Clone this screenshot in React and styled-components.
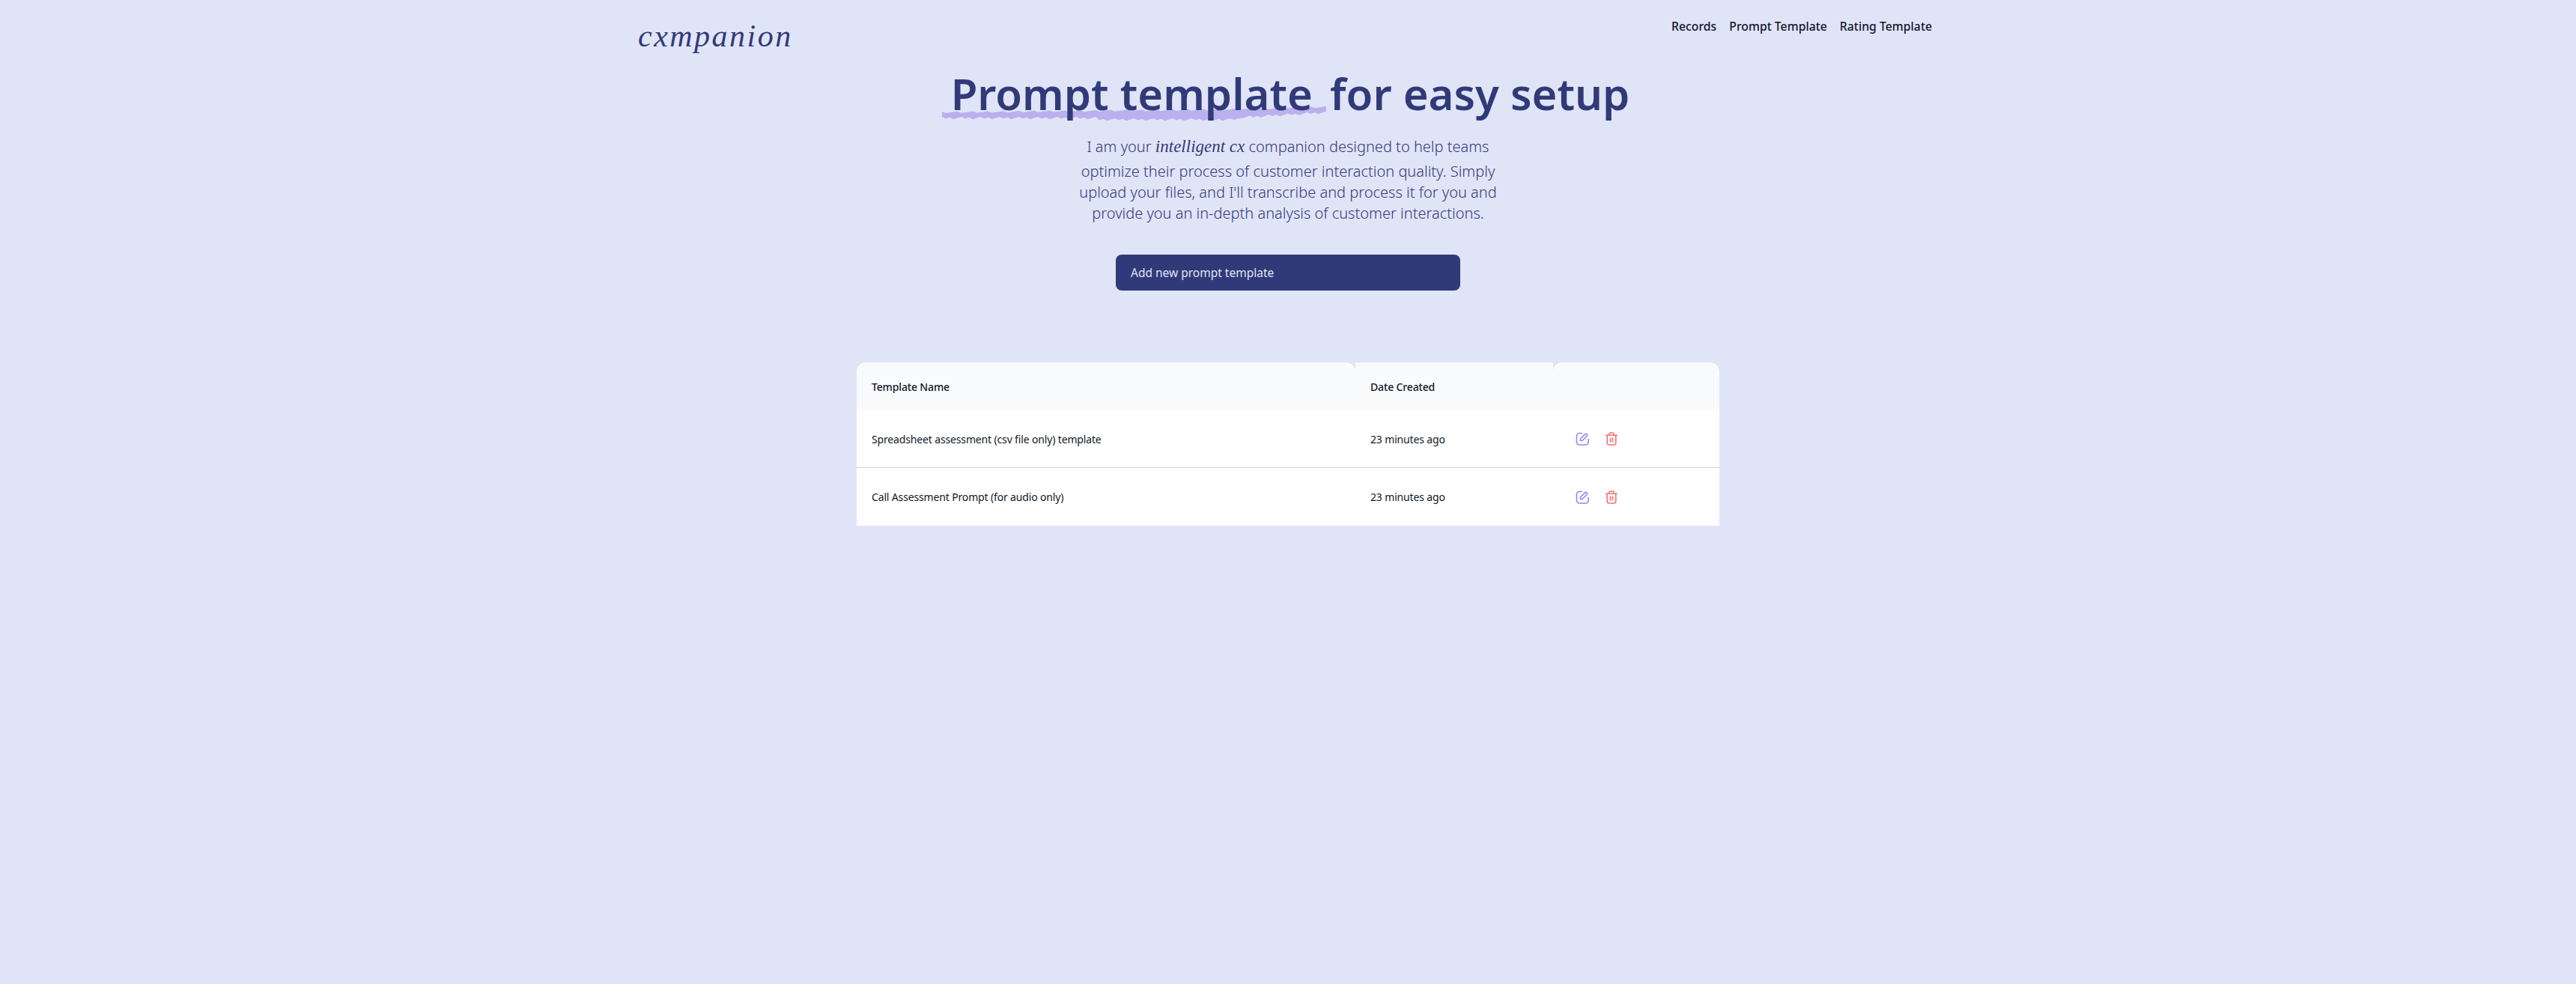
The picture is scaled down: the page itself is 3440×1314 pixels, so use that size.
import styled, { createGlobalStyle } from "styled-components";

const templates = [
  { name: "Spreadsheet assessment (csv file only) template", date: "23 minutes ago" },
  { name: "Call Assessment Prompt (for audio only)", date: "23 minutes ago" },
];

const links = ["Records", "Prompt Template", "Rating Template"];

// rough brush edge for the headline highlight
const brushPath = (() => {
  const top = [];
  const bottom = [];
  for (let i = 0; i <= 100; i++) {
    const x = (i / 100) * 513;
    const drift = i > 75 ? (i - 75) * 0.3 : 0;
    top.push(`${x.toFixed(1)} ${(7 - (i / 100) * 5 + ((i * 7) % 4) * 0.7 - drift * 0.3).toFixed(1)}`);
    bottom.push(`${x.toFixed(1)} ${(14 + ((i * 13) % 5) * 0.8 + (i > 40 && i < 78 ? 2 : 0) - drift).toFixed(1)}`);
  }
  return `M${top.join(" L")} L${bottom.reverse().join(" L")} Z`;
})();

function EditIcon() {
  return (
    <IconSvg width="18" height="18" viewBox="0 0 18 18" stroke="#8b8cf8">
      <path d="M8.5 1.5H5A3.5 3.5 0 0 0 1.5 5v8.5A3.5 3.5 0 0 0 5 17h8.5a3.5 3.5 0 0 0 3.5-3.5V9.5" />
      <path d="M6.5 11.5V9L12.6 2.9a1.6 1.6 0 0 1 2.3 0l.2.2a1.6 1.6 0 0 1 0 2.3L9 11.5Z" />
    </IconSvg>
  );
}

function TrashIcon() {
  return (
    <IconSvg width="16" height="18" viewBox="0 0 16 18" stroke="#f87171">
      <path d="M.8 4.2h14.4" />
      <path d="M4.8 4.2V3a2 2 0 0 1 2-2h2.4a2 2 0 0 1 2 2v1.2" />
      <path d="M2.2 4.2V14a3 3 0 0 0 3 3h5.6a3 3 0 0 0 3-3V4.2" />
      <path d="M6.5 8v5M9.5 8v5" />
    </IconSvg>
  );
}

export default function App() {
  return (
    <Page>
      <GlobalStyle />
      <Header>
        <Logo>cxmpanion</Logo>
        <Nav>
          {links.map((link) => (
            <NavLink key={link} href="#">
              {link}
            </NavLink>
          ))}
        </Nav>
      </Header>
      <Hero>
        <Title>
          <Highlighted>
            <Brush viewBox="0 0 513 20" preserveAspectRatio="none" aria-hidden="true">
              <path d={brushPath} fill="#bbb0ee" />
            </Brush>
            Prompt template
          </Highlighted>{" "}
          for easy setup
        </Title>
        <Intro>
          I am your <Script>intelligent cx</Script> companion designed to help teams
          optimize their process of customer interaction quality. Simply upload your
          files, and I'll transcribe and process it for you and provide you an in-depth
          analysis of customer interactions.
        </Intro>
        <AddButton>Add new prompt template</AddButton>
      </Hero>
      <Table>
        <HeadRow>
          <HeadCell $rounded>Template Name</HeadCell>
          <HeadCell>Date Created</HeadCell>
          <HeadCell $rounded />
        </HeadRow>
        {templates.map((t) => (
          <Row key={t.name}>
            <Cell>{t.name}</Cell>
            <Cell>{t.date}</Cell>
            <Actions>
              <EditIcon />
              <TrashIcon />
            </Actions>
          </Row>
        ))}
      </Table>
    </Page>
  );
}

const GlobalStyle = createGlobalStyle`
  body {
    margin: 0;
    background: #e0e4f7;
    font-family: "Noto Sans", "Open Sans", sans-serif;
  }
`;

const Page = styled.div`
  min-height: 1314px;
  display: flex;
  flex-direction: column;
  align-items: center;
`;

const Header = styled.header`
  box-sizing: border-box;
  width: 1760px;
  height: 90px;
  padding: 24px 20px 0 12px;
  display: flex;
  justify-content: space-between;
  align-items: flex-start;
`;

const Logo = styled.div`
  margin-top: 4px;
  font-family: "Liberation Serif", serif;
  font-style: italic;
  font-size: 42px;
  line-height: 40px;
  letter-spacing: 2.5px;
  color: #313a78;
`;

const Nav = styled.nav`
  display: flex;
  gap: 17px;
  margin-top: -1px;
`;

const NavLink = styled.a`
  font-size: 15.8px;
  line-height: 24px;
  font-weight: 500;
  color: #14162e;
  text-decoration: none;
`;

const Hero = styled.section`
  display: flex;
  flex-direction: column;
  align-items: center;
`;

const Title = styled.h1`
  margin: 0;
  font-size: 58px;
  line-height: 70px;
  font-weight: 600;
  color: #313a78;
  white-space: nowrap;
`;

const Highlighted = styled.span`
  position: relative;
  z-index: 0;
  margin: 0 8px 0 6px;
`;

const Brush = styled.svg`
  position: absolute;
  z-index: -1;
  left: -12px;
  top: 57px;
  width: 513px;
  height: 20px;
`;

const Intro = styled.p`
  width: 570px;
  margin: 17px 0 0;
  font-size: 20px;
  line-height: 28px;
  font-weight: 300;
  text-align: center;
  color: #313a78;
`;

const Script = styled.span`
  font-family: "Liberation Serif", serif;
  font-style: italic;
  font-size: 23px;
  line-height: 38px;
`;

const AddButton = styled.button`
  width: 460px;
  height: 48px;
  margin-top: 41px;
  padding: 0 20px;
  border: 0;
  border-radius: 8px;
  background: #313a78;
  color: #e0e4f7;
  font: 400 15.5px "Noto Sans", sans-serif;
  text-align: left;
`;

const Table = styled.div`
  width: 1152px;
  margin-top: 96px;
  font-size: 14px;
  letter-spacing: -0.15px;
  color: #111827;
`;

const columns = "666px 264px 222px";

const HeadRow = styled.div`
  display: grid;
  grid-template-columns: ${columns};
  height: 64px;
`;

const HeadCell = styled.div`
  display: flex;
  align-items: center;
  padding-left: 20px;
  background: #f9fafb;
  font-weight: 500;
  border-radius: ${(p) => (p.$rounded ? "12px 12px 0 0" : "0")};
`;

const Row = styled.div`
  display: grid;
  grid-template-columns: ${columns};
  height: 76px;
  background: #fff;
  & + & {
    height: 77px;
    border-top: 1px solid #d1d3e0;
  }
`;

const Cell = styled.div`
  display: flex;
  align-items: center;
  padding-left: 20px;
`;

const Actions = styled(Cell)`
  gap: 22px;
  padding-left: 30px;
`;

const IconSvg = styled.svg`
  fill: none;
  stroke-width: 1.6;
  stroke-linecap: round;
  stroke-linejoin: round;
`;
